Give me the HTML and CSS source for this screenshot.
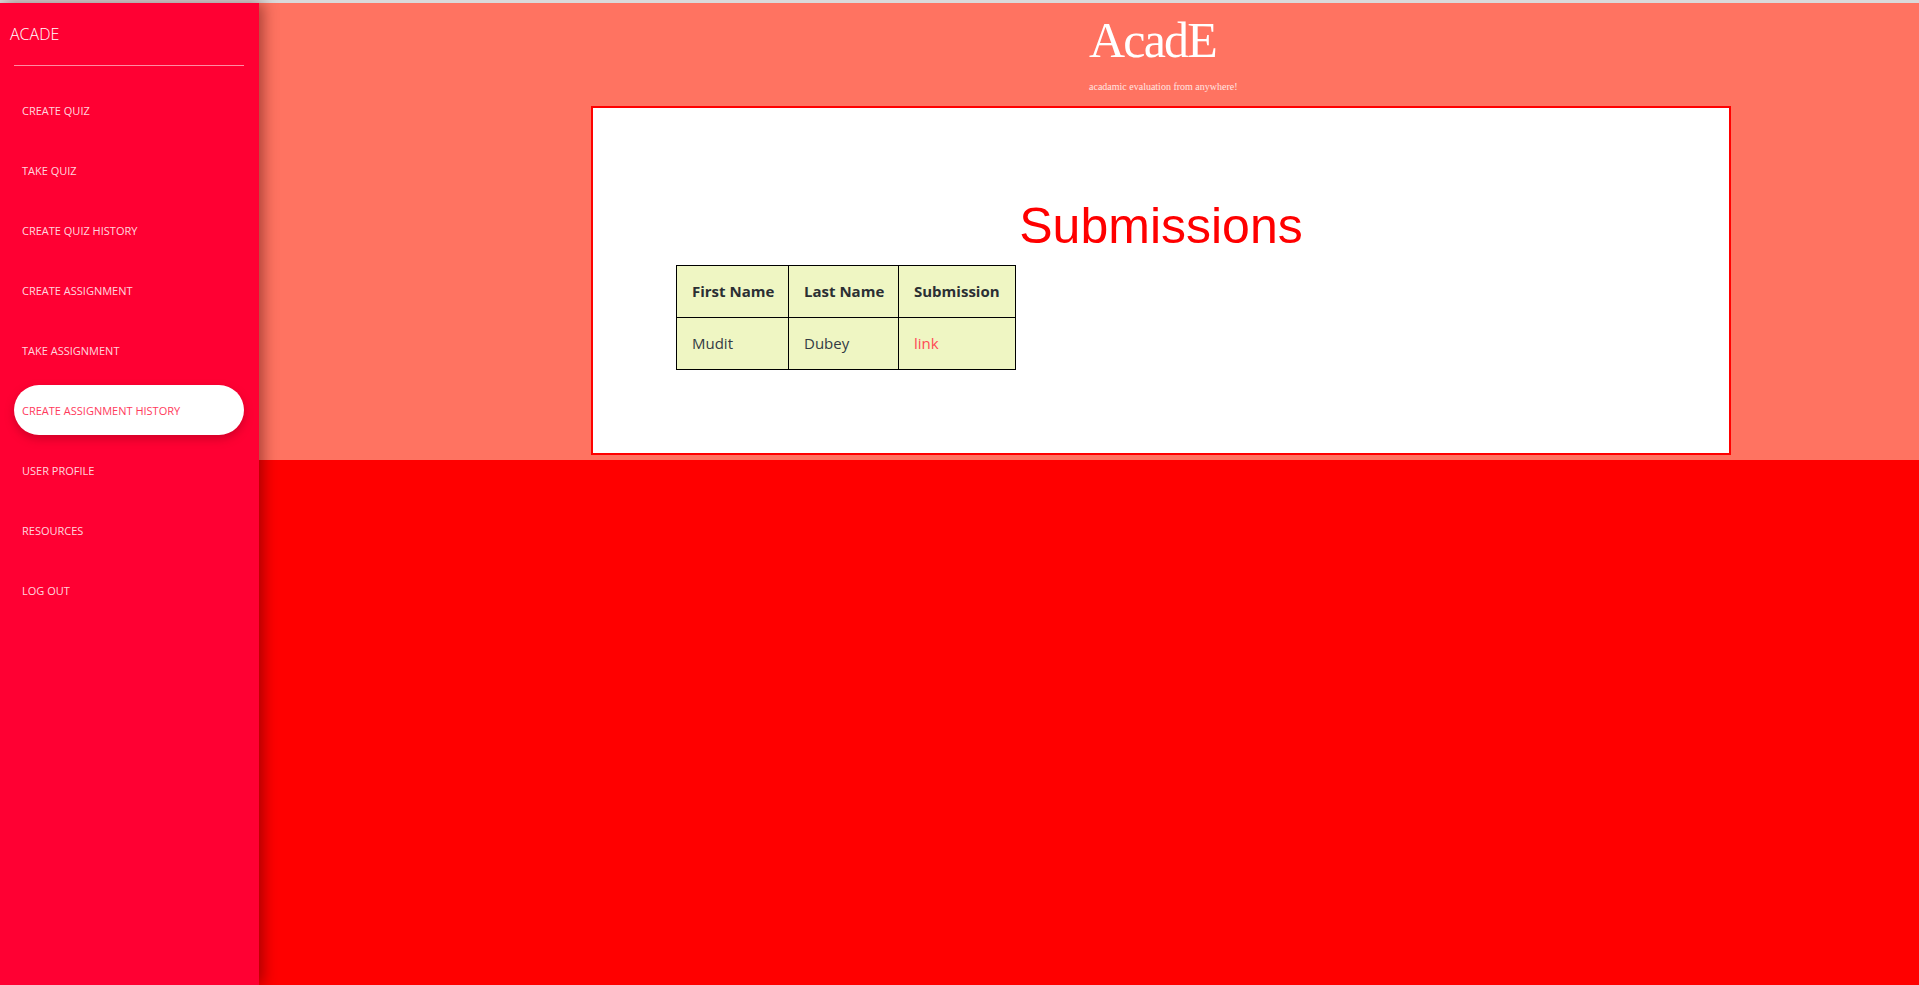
FILE: index.html
```html
<!DOCTYPE html>
<html lang="en">
<head>
<meta charset="utf-8">
<title>AcadE</title>
<link rel="stylesheet" href="styles.css">
</head>
<body>
<div class="topline"></div>
<div class="page">
  <aside class="sidebar">
    <div class="brand">ACADE</div>
    <div class="rule"></div>
    <nav class="nav">
      <a class="nav-item" href="#">CREATE QUIZ</a>
      <a class="nav-item" href="#">TAKE QUIZ</a>
      <a class="nav-item" href="#">CREATE QUIZ HISTORY</a>
      <a class="nav-item" href="#">CREATE ASSIGNMENT</a>
      <a class="nav-item" href="#">TAKE ASSIGNMENT</a>
      <a class="nav-item active" href="#">CREATE ASSIGNMENT HISTORY</a>
      <a class="nav-item" href="#">USER PROFILE</a>
      <a class="nav-item" href="#">RESOURCES</a>
      <a class="nav-item" href="#">LOG OUT</a>
    </nav>
  </aside>
  <main class="main">
    <header class="hero">
      <div class="hero-text">
        <div class="title">AcadE</div>
        <div class="subtitle">acadamic evaluation from anywhere!</div>
      </div>
      <section class="card">
        <h1 class="heading">Submissions</h1>
        <table class="subs">
          <thead>
            <tr><th class="c1">First Name</th><th class="c2">Last Name</th><th class="c3">Submission</th></tr>
          </thead>
          <tbody>
            <tr><td>Mudit</td><td>Dubey</td><td><a class="link" href="#">link</a></td></tr>
          </tbody>
        </table>
      </section>
    </header>
  </main>
</div>
</body>
</html>
```

FILE: styles.css
```css
html, body {
  margin: 0;
  padding: 0;
}
body {
  width: 1919px;
  height: 985px;
  overflow: hidden;
  background: #ff0000;
  font-family: "Open Sans", "Liberation Sans", sans-serif;
}
.topline {
  height: 3px;
  background: #dadada;
}
.page {
  display: flex;
  height: 982px;
}
.sidebar {
  width: 259px;
  flex: 0 0 259px;
  background: #ff0033;
  box-shadow: 4px 0 14px rgba(60, 0, 0, 0.45);
  position: relative;
  z-index: 2;
  display: flex;
  flex-direction: column;
}
.brand {
  padding: 21px 0 0 10px;
  font-size: 16px;
  line-height: 20px;
  font-weight: 300;
  color: #ffffff;
}
.rule {
  margin: 21px 15px 0 14px;
  height: 1px;
  background: rgba(255, 255, 255, 0.55);
}
.nav {
  display: flex;
  flex-direction: column;
  gap: 10px;
  margin: 19px 15px 0 14px;
}
.nav-item {
  height: 50px;
  display: flex;
  align-items: center;
  padding-left: 8px;
  border-radius: 25px;
  font-size: 11px;
  color: rgba(255, 235, 240, 0.92);
  text-decoration: none;
  white-space: nowrap;
}
.nav-item.active {
  background: #ffffff;
  color: #ff3a5c;
  box-shadow: 0 4px 10px rgba(120, 0, 20, 0.35);
}
.main {
  flex: 1;
  background: #ff0000;
  display: flex;
  flex-direction: column;
}
.hero {
  height: 457px;
  box-sizing: border-box;
  background: #ff7361;
  padding-top: 12px;
}
.hero-text {
  margin-left: 830px;
}
.title {
  font-family: "Liberation Serif", "DejaVu Serif", serif;
  font-size: 50px;
  line-height: 50px;
  letter-spacing: -1.8px;
  color: #ffffff;
}
.subtitle {
  margin-top: 16px;
  font-family: "Liberation Serif", "DejaVu Serif", serif;
  font-size: 10px;
  line-height: 12px;
  color: #ffe6e1;
}
.card {
  margin: 13px 0 0 332px;
  width: 1140px;
  height: 349px;
  box-sizing: border-box;
  border: 2px solid #ff0000;
  background: #ffffff;
  padding: 90px 0 0 83px;
}
.heading {
  margin: 0 0 9px -83px;
  font-family: "Liberation Sans", Arial, sans-serif;
  font-weight: 400;
  font-size: 50px;
  line-height: 57.5px;
  color: #ff0000;
  text-align: center;
}
.subs {
  border-collapse: collapse;
  table-layout: fixed;
  width: 339px;
  background: #eff6c3;
  font-size: 15px;
  color: #333b44;
}
.subs th, .subs td {
  border: 1px solid #000000;
  height: 52px;
  box-sizing: border-box;
  padding: 0 0 0 15px;
  text-align: left;
  white-space: nowrap;
  overflow: hidden;
}
.subs th {
  font-weight: 700;
  color: #2b2f33;
}
.c1 { width: 112px; }
.c2 { width: 110px; }
.c3 { width: 117px; }
.link {
  color: #ff4a55;
  text-decoration: none;
}
```
